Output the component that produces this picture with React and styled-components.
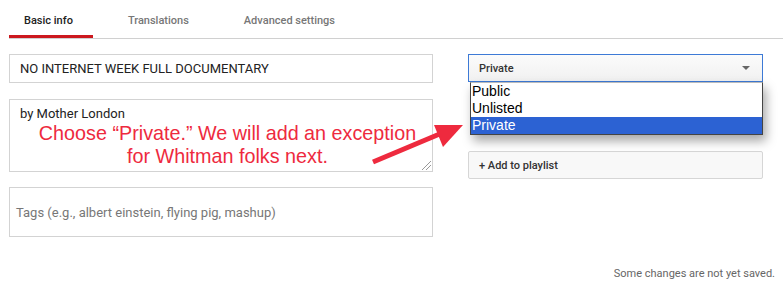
import React from "react";
import styled, { createGlobalStyle } from "styled-components";

const GlobalStyle = createGlobalStyle`
  html, body {
    margin: 0;
    padding: 0;
    background: #fff;
  }
  body {
    font-family: Roboto, "Liberation Sans", Arial, sans-serif;
    color: #222;
  }
`;

export default function App() {
  const tabs = ["Basic info", "Translations", "Advanced settings"];
  const options = ["Public", "Unlisted", "Private"];
  return (
    <Page>
      <GlobalStyle />
      <TabBar>
        {tabs.map((tab, i) => (
          <Tab key={tab} active={i === 0}>
            {tab}
          </Tab>
        ))}
      </TabBar>
      <Content>
        <LeftColumn>
          <Field height={29}>NO INTERNET WEEK FULL DOCUMENTARY</Field>
          <TextArea>
            by Mother London
            <Grip />
          </TextArea>
          <Field height={50} placeholder>
            Tags (e.g., albert einstein, flying pig, mashup)
          </Field>
        </LeftColumn>
        <RightColumn>
          <SelectWrap>
            <Select>
              Private
              <Caret />
            </Select>
            <Menu>
              {options.map((opt) => (
                <MenuItem key={opt} selected={opt === "Private"}>
                  {opt}
                </MenuItem>
              ))}
            </Menu>
          </SelectWrap>
          <PlaylistButton>+ Add to playlist</PlaylistButton>
        </RightColumn>
      </Content>
      <Footer>Some changes are not yet saved.</Footer>
      <Note>
        Choose “Private.” We will add an exception
        <br />
        for Whitman folks next.
      </Note>
      <Arrow width="783" height="290" viewBox="0 0 783 290">
        <line
          x1="373"
          y1="162"
          x2="442"
          y2="133"
          stroke="#ee2a3e"
          strokeWidth="5"
        />
        <polygon points="463,125 434,125 443,147" fill="#ee2a3e" />
      </Arrow>
    </Page>
  );
}

const Page = styled.div`
  position: relative;
  width: 783px;
  height: 290px;
  overflow: hidden;
`;

const TabBar = styled.div`
  display: flex;
  margin-left: 9px;
  height: 38px;
  border-bottom: 1px solid #d0d0d0;
`;

const Tab = styled.div`
  padding: 0 20px 0 15px;
  margin-right: 20px;
  font-size: 11px;
  font-weight: 500;
  line-height: 42px;
  height: 35px;
  color: ${(p) => (p.active ? "#222" : "#777")};
  border-bottom: 3px solid ${(p) => (p.active ? "#cc181e" : "transparent")};
  box-sizing: content-box;
  white-space: nowrap;
`;

const Content = styled.div`
  display: flex;
  gap: 35px;
  padding: 15px 0 0 9px;
`;

const LeftColumn = styled.div`
  display: flex;
  flex-direction: column;
  gap: 16px;
  width: 424px;
`;

const Field = styled.div`
  box-sizing: border-box;
  height: ${(p) => p.height}px;
  border: 1px solid #d3d3d3;
  display: flex;
  align-items: center;
  padding-left: ${(p) => (p.placeholder ? 6 : 10)}px;
  font-size: 13px;
  color: ${(p) => (p.placeholder ? "#777" : "#222")};
`;

const TextArea = styled.div`
  position: relative;
  box-sizing: border-box;
  height: 73px;
  border: 1px solid #d3d3d3;
  padding: 6px 10px;
  font-size: 13px;
  line-height: 16px;
  color: #222;
  margin-bottom: -1px;
`;

const Grip = styled.span`
  position: absolute;
  right: 1px;
  bottom: 1px;
  width: 9px;
  height: 9px;
  background: linear-gradient(
    135deg,
    transparent 0 45%,
    #999 45% 52%,
    transparent 52% 70%,
    #999 70% 77%,
    transparent 77%
  );
`;

const RightColumn = styled.div`
  display: flex;
  flex-direction: column;
  width: 295px;
`;

const SelectWrap = styled.div`
  position: relative;
`;

const Select = styled.div`
  box-sizing: border-box;
  height: 28px;
  border: 1px solid #3d7ad6;
  background: linear-gradient(#fbfbfb, #f1f1f1);
  display: flex;
  align-items: center;
  justify-content: space-between;
  padding: 0 12px 0 10px;
  font-size: 11px;
  font-weight: 500;
  color: #333;
`;

const Caret = styled.span`
  width: 0;
  height: 0;
  border-left: 4px solid transparent;
  border-right: 4px solid transparent;
  border-top: 4px solid #666;
`;

const Menu = styled.div`
  position: absolute;
  top: 28px;
  left: 2px;
  width: 293px;
  box-sizing: border-box;
  background: #fff;
  border: 1px solid #444;
  border-top-color: #bbb;
  box-shadow: 3px 6px 10px rgba(0, 0, 0, 0.35);
  font-family: "Liberation Sans", Arial, sans-serif;
  font-size: 14px;
`;

const MenuItem = styled.div`
  height: 17px;
  line-height: 17px;
  padding-left: 1px;
  color: ${(p) => (p.selected ? "#fff" : "#000")};
  background: ${(p) => (p.selected ? "#2c62d3" : "transparent")};
`;

const PlaylistButton = styled.div`
  box-sizing: border-box;
  margin-top: 69px;
  height: 28px;
  border: 1px solid #d6d6d6;
  border-radius: 2px;
  background: #f8f8f8;
  display: flex;
  align-items: center;
  padding-left: 10px;
  font-size: 11px;
  font-weight: 500;
  color: #333;
`;

const Footer = styled.div`
  position: absolute;
  right: 8px;
  bottom: 10px;
  font-size: 11px;
  color: #666;
`;

const Note = styled.div`
  position: absolute;
  left: 9px;
  top: 122px;
  width: 437px;
  text-align: center;
  font-family: "Liberation Sans", Arial, sans-serif;
  font-size: 19.75px;
  line-height: 23px;
  color: #ee2a3e;
`;

const Arrow = styled.svg`
  position: absolute;
  left: 0;
  top: 0;
  pointer-events: none;
`;
